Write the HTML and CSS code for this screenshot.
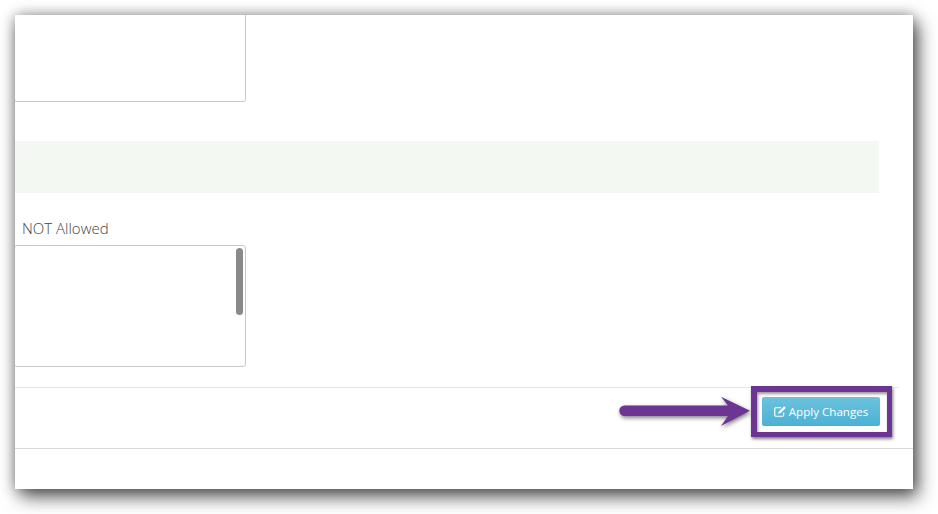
FILE: index.html
```html
<!DOCTYPE html>
<html>
	<head>
		<meta charset="UTF-8">
		<title>Apply Changes</title>
		<link rel="stylesheet" href="styles.css">
	</head>
	<body>
		<div class="window">
			<div class="listbox listbox-top"></div>
			<div class="notice"></div>
			<label class="field-label">NOT Allowed</label>
			<div class="listbox listbox-bottom">
				<span class="thumb"></span>
			</div>
			<div class="actions">
				<a class="btn" href="#">
					<svg class="btn-icon" viewBox="0 0 14 12" width="13" height="11">
						<path d="M10.500 7v2.600A1.600 1.600 0 0 1 8.900 11.200H2.300A1.600 1.600 0 0 1 .7 9.600V3.400A1.600 1.600 0 0 1 2.300 1.800H7.500" fill="none" stroke="#fff" stroke-width="1.300"/>
						<path d="M4.500 8.500l.5-2.300L10.900.4l1.900 1.800-5.900 5.800z" fill="#fff"/>
					</svg>
					Apply Changes
				</a>
			</div>
			<div class="footer"></div>
		</div>
		<div class="arrow">
			<svg viewBox="0 0 134 40" width="134" height="40">
				<path d="M6.500 14.500H110L103 5.700 132 19.700 103 35 110 25H6.500a5.250 5.250 0 0 1 0-10.500z" fill="#6c3593"/>
			</svg>
		</div>
		<div class="highlight"></div>
	</body>
</html>
```

FILE: styles.css
```css
*{
	box-sizing: border-box;
	margin: 0;
	padding: 0;
}
body{
	width: 938px;
	height: 514px;
	padding: 15px 25px 25px 15px;
	background-color: #fff;
	font-family: "Open Sans", "Liberation Sans", sans-serif;
	overflow: hidden;
}
.window{
	width: 898px;
	height: 474px;
	background-color: #fff;
	overflow: hidden;
	box-shadow: 5px 8px 17px rgba(0, 0, 0, 0.62), 0 0 13px rgba(0, 0, 0, 0.35);
}
.listbox{
	position: relative;
	width: 232px;
	margin-left: -1px;
	border: 1px solid #c8c8c8;
	border-radius: 3px;
	background-color: #fff;
}
.listbox-top{
	height: 97px;
	margin-top: -10px;
}
.listbox-bottom{
	height: 122px;
}
.notice{
	width: 864px;
	height: 52px;
	margin-top: 39px;
	background-color: #f4f8f3;
}
.field-label{
	display: block;
	height: 52px;
	padding: 25px 0 0 7px;
	font-size: 15px;
	font-weight: 300;
	line-height: 20px;
	color: #444;
}
.thumb{
	position: absolute;
	top: 2px;
	right: 2px;
	width: 7px;
	height: 67px;
	border-radius: 4px;
	background-color: #8a8a8a;
}
.actions{
	display: flex;
	justify-content: flex-end;
	width: 884px;
	height: 61px;
	margin-top: 20px;
	padding: 9px 19px 0 0;
	border-top: 1px solid #e6e6e6;
}
.btn{
	display: flex;
	align-items: center;
	justify-content: center;
	gap: 2px;
	width: 118px;
	height: 29px;
	border-radius: 2px;
	background: linear-gradient(#6cc2dd, #4bb1d4);
	color: #fff;
	font-size: 11.6px;
	font-weight: 500;
	text-decoration: none;
	white-space: nowrap;
}
.btn-icon{
	flex-shrink: 0;
}
.footer{
	border-top: 1px solid #d8d8d8;
}
.arrow{
	position: absolute;
	top: 391px;
	left: 618px;
	filter: drop-shadow(1px 2px 2px rgba(0, 0, 0, 0.5));
}
.highlight{
	position: absolute;
	top: 386px;
	left: 751px;
	width: 141px;
	height: 51px;
	border: solid #6c3593;
	border-width: 6px 5px 5px 6px;
	box-shadow: 1px 2px 3px rgba(0, 0, 0, 0.5), inset 1px 2px 3px rgba(0, 0, 0, 0.4);
}
```
